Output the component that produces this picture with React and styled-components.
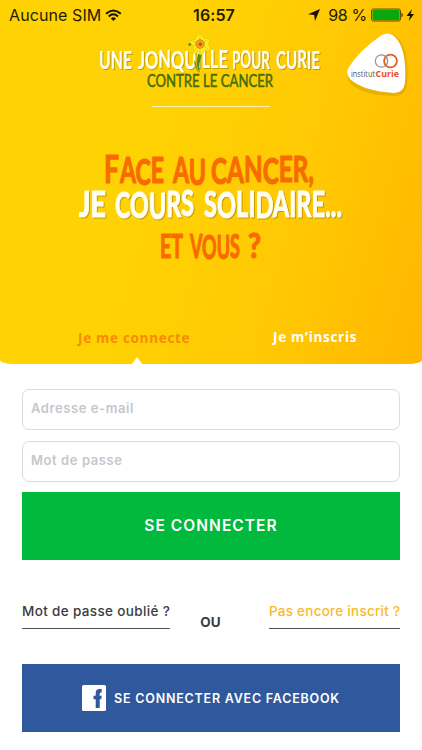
import React from 'react';
import styled, { createGlobalStyle } from 'styled-components';

const GlobalStyle = createGlobalStyle`
  * {
    box-sizing: border-box;
  }

  body {
    margin: 0;
    background: #ffffff;
    font-family: Inter, "Liberation Sans", sans-serif;
  }
`;

const Screen = styled.div`
  width: 422px;
  height: 750px;
  overflow: hidden;
  background: #ffffff;
`;

const Hero = styled.header`
  display: flex;
  flex-direction: column;
  height: 364px;
  border-radius: 0 0 14px 14px / 0 0 4px 4px;
  background: linear-gradient(106deg, #ffd203 0%, #ffd203 38%, #ffc803 70%, #ffb600 100%);
`;

const StatusBar = styled.div`
  display: grid;
  grid-template-columns: 1fr auto 1fr;
  align-items: center;
  height: 30px;
  padding: 0 7px 0 9px;
  color: #241c00;
  font-size: 16px;
  line-height: 30px;
`;

const StatusGroup = styled.div`
  display: flex;
  align-items: center;
  justify-content: ${({ $end }) => ($end ? 'flex-end' : 'flex-start')};
  gap: 4px;
  letter-spacing: ${({ $end }) => ($end ? '-0.3px' : '0.1px')};
  white-space: nowrap;

  svg {
    flex: none;
  }

  svg:first-child {
    margin-right: 4px;
  }
`;

const Clock = styled.div`
  padding-left: 4px;
  font-weight: 600;
  letter-spacing: 0.1px;
`;

const Brand = styled.div`
  display: flex;
  justify-content: space-between;
  height: 76px;
  padding: 2px 12px 0 97px;
`;

const Rule = styled.div`
  width: 118px;
  height: 1px;
  margin-left: 152px;
  background: #fff3b5;
`;

const Headline = styled.h1`
  display: flex;
  flex-direction: column;
  height: 188px;
  margin: 0;
  padding-top: 40px;

  svg {
    display: block;
    margin: 0 auto;
  }
`;

const Lettering = styled.text`
  font-family: ${({ $sans }) => ($sans ? '"Open Sans"' : 'Lato')}, sans-serif;
  font-weight: ${({ $weight }) => $weight || 700};
  fill: ${({ $color }) => $color};
  stroke: ${({ $color }) => $color};
  stroke-width: ${({ $brush }) => $brush || 0};
  stroke-linejoin: round;
  filter: ${({ $shadow }) => ($shadow ? 'drop-shadow(1px 1px 0.5px rgba(140, 110, 0, 0.5))' : 'none')};
`;

const Tabs = styled.nav`
  display: flex;
  flex: 1;
  padding-left: 59px;
`;

const Tab = styled.button`
  position: relative;
  display: flex;
  align-items: flex-start;
  width: ${({ $active }) => ($active ? '155px' : '201px')};
  padding: ${({ $active }) => ($active ? '33px 0 0 19px' : '32px 0 0 59px')};
  border: 0;
  background: none;
  color: ${({ $active }) => ($active ? '#f88a00' : '#ffffff')};
  font: 700 13.5px/20px "Open Sans", sans-serif;
  letter-spacing: 0.7px;
  white-space: nowrap;

  &::after {
    content: '';
    display: ${({ $active }) => ($active ? 'block' : 'none')};
    position: absolute;
    bottom: 0;
    left: 73px;
    border: 5px solid transparent;
    border-top: 0;
    border-bottom: 7px solid #ffffff;
  }
`;

const Form = styled.form`
  display: flex;
  flex-direction: column;
  padding: 25px 22px 0;
`;

const Field = styled.input`
  height: 41px;
  margin-bottom: 10.5px;
  padding: 0 8px 3px;
  border: 1px solid #dcdcde;
  border-radius: 7px;
  outline: 0;
  background: #ffffff;
  font: 600 13px Inter, sans-serif;
  letter-spacing: 0.58px;

  &::placeholder {
    color: #c6c6cd;
    opacity: 1;
  }
`;

const Button = styled.button`
  display: flex;
  align-items: center;
  justify-content: center;
  height: 68px;
  padding: 0 0 2px;
  border: 0;
  background: #00b93d;
  color: #ffffff;
  font: 600 15.5px Inter, sans-serif;
  letter-spacing: 1.05px;
`;

const FacebookButton = styled(Button)`
  gap: 8px;
  margin-top: 35px;
  padding: 0;
  background: #30599d;
  font-size: 12.5px;
  letter-spacing: 0.78px;
`;

const Links = styled.div`
  display: flex;
  justify-content: space-between;
  height: 29px;
  margin-top: 40px;
`;

const Link = styled.a`
  width: ${({ $width }) => $width};
  border-bottom: 1px solid #505052;
  color: ${({ $color }) => $color};
  font-size: 13.5px;
  font-weight: 500;
  line-height: 22px;
  letter-spacing: ${({ $spacing }) => $spacing};
  white-space: nowrap;
`;

const Or = styled.span`
  align-self: flex-end;
  margin-right: 18px;
  color: #3c3c3e;
  font-size: 13.5px;
  font-weight: 700;
  line-height: 14px;
`;

const WifiIcon = () => (
  <svg width="17" height="13" viewBox="0 0 17 13" fill="none" stroke="#171300" strokeWidth="2">
    <path d="M1 4.8Q8.3-1.8 15.8 4.8M3.7 7.4Q8.4 3.1 13 7.4" />
    <path d="M5.8 9.4Q8.4 7 11 9.4L8.4 12Z" fill="#171300" stroke="none" />
  </svg>
);

const LocationIcon = () => (
  <svg width="12" height="12" viewBox="0 0 12 12">
    <path d="M12 0L7 12L6.2 6.1L0 5.2Z" fill="#171300" />
  </svg>
);

const BatteryIcon = () => (
  <svg width="44" height="14" viewBox="0 0 44 14">
    <rect x=".5" y="1" width="29" height="12" rx="2" fill="#e6ba00" stroke="#655000" />
    <rect x="1.5" y="2" width="27" height="10" rx="1" fill="#08a80c" />
    <path d="M30.5 4.5Q33 7 30.5 9.5Z" fill="#302600" />
    <path d="M41 1L35.5 8H39L37.8 13L43 6H39.6Z" fill="#171300" />
  </svg>
);

const Daffodil = () => (
  <g strokeLinejoin="round">
    <path d="M101 22Q98 34 103 41Q101 33 105 22Z" fill="#578b16" />
    <path d="M97 28Q100 31 100 35L102 41Q97 35 97 28Z" fill="#75991b" />
    <circle cx="92.8" cy="12.5" r="1.4" fill="#4b8f16" />
    <path
      d="M103 1Q106 4 107 7L113 6Q113 9 111 12Q114 15 113 18Q110 20 108 18Q106 23 103 23L101 19Q96 23 95 21L97 14Q92 11 92 7L98 8Q99 3 103 1Z"
      fill="#fbed20"
      stroke="#e3c40b"
      strokeWidth=".6"
    />
    <path d="M103 2V12L112 7M103 12L111 17M103 12L103 22M103 12L96 20M103 12L93 8" fill="none" stroke="#dfc10c" strokeWidth=".7" />
    <circle cx="103" cy="12" r="4.2" fill="#f9a415" stroke="#e48208" />
    <circle cx="103.3" cy="12.3" r="1.8" fill="#c9522b" />
  </g>
);

const title = [
  { text: 'UNE', x: 2, y: 37, width: 33, dy: '0 0 0' },
  { text: 'JONQUILLE', x: 41, y: 37, width: 90, dy: '0 0 -1 1 0 -1 0 0 0' },
  { text: 'POUR', x: 135, y: 37, width: 38, dy: '0 -1 1 0' },
  { text: 'CURIE', x: 179, y: 37, width: 44, dy: '0 0 -1 1 0' },
];

const JonquilleLogo = () => (
  <svg width="226" height="62" viewBox="0 0 226 62">
    {title.map(({ text, width, ...position }) => (
      <Lettering
        key={text}
        {...position}
        fontSize="25"
        textLength={width}
        lengthAdjust="spacingAndGlyphs"
        $color="#fffef0"
        $brush={0.2}
        $shadow
      >
        {text}
      </Lettering>
    ))}
    <Lettering x="50" y="55" $color="#426d08" $weight={400} $brush={0.5} fontSize="16.5" textLength="126" lengthAdjust="spacingAndGlyphs">CONTRE LE CANCER</Lettering>
    <Daffodil />
  </svg>
);

const CurieLogo = () => (
  <svg width="65" height="66" viewBox="0 0 65 66">
    <path d="M5 37Q0 44 5 51Q18 64 50 64Q61 64 62 52Q65 17 52 5Q44-2 34 5Q16 18 5 37Z" fill="#8d6800" opacity=".2" />
    <path d="M4 35Q0 41 5 47Q18 59 49 61Q59 61 60 50Q62 17 50 5Q43-2 34 5Q15 18 4 35Z" fill="#fff" />
    <g fill="none">
      <circle cx="36.5" cy="29" r="6.2" stroke="#999" strokeWidth="1.3" />
      <circle cx="45.5" cy="29" r="6.4" stroke="#e95b21" strokeWidth="1.8" />
      <path d="M40.4 24.5A6.2 6.2 0 0 1 42.2 31" stroke="#999" strokeWidth="1.2" />
    </g>
    <Lettering $sans x="6" y="45" $color="#555" $weight={400} fontSize="8.5" textLength="24" lengthAdjust="spacingAndGlyphs">institut</Lettering>
    <Lettering $sans x="30.5" y="45" $color="#e65022" fontSize="9" textLength="23.5" lengthAdjust="spacingAndGlyphs">Curie</Lettering>
  </svg>
);

// Slight baseline shifts give each line its brushed, uneven look
const headline = [
  { text: 'F', x: 27, y: 36, size: 39, width: 15, color: '#f76b00', dy: '0' },
  { text: 'ACE', x: 43, y: 37, size: 36, width: 44, color: '#f76b00', dy: '-1 2 -2' },
  { text: 'AU', x: 96, y: 36, size: 36, width: 33, color: '#f76b00', dy: '0 2' },
  { text: 'CANCER,', x: 134, y: 37, size: 37, width: 103, color: '#f76b00', dy: '0 -1 -1 2 -2 0 0' },
  { text: 'JE', x: 2, y: 70, size: 36, width: 27, color: '#fffef0', dy: '0 0' },
  { text: 'COURS', x: 38, y: 71, size: 37, width: 79, color: '#fffef0', dy: '0 0 1 -2 -1' },
  { text: 'SOLIDAIRE...', x: 127, y: 70, size: 37, width: 138, color: '#fffef0', dy: '0 1 -1 0 1 -1 0 0 0 0 0 0' },
  { text: 'ET', x: 83, y: 111, size: 32, width: 23, color: '#f76b00', dy: '0 0' },
  { text: 'VOUS', x: 113, y: 111, size: 33, width: 50, color: '#f76b00', dy: '0 1 0 -1' },
  { text: '?', x: 171, y: 111, size: 34, width: 13, color: '#f76b00', dy: '0' },
];

const HeadlineArt = () => (
  <svg width="268" height="125" viewBox="0 0 268 125">
    {headline.map(({ text, size, width, color, ...position }) => (
      <Lettering
        key={text}
        {...position}
        fontSize={size}
        textLength={width}
        lengthAdjust="spacingAndGlyphs"
        $color={color}
        $brush={1.2}
        $shadow={color === '#fffef0'}
      >
        {text}
      </Lettering>
    ))}
  </svg>
);

const FacebookIcon = () => (
  <svg width="24" height="26" viewBox="0 0 24 26">
    <rect width="24" height="26" rx="1.5" fill="#fff" />
    <path d="M13.7 23V14.3H11.5V10.7H13.7V8.2Q13.7 4 17.5 4H19.7V7.6H18.8Q17.7 7.6 17.7 8.9V10.7H19.7L19.3 14.3H17.7V23Z" fill="#30599d" />
  </svg>
);

const App = () => (
  <Screen>
    <GlobalStyle />
    <Hero>
      <StatusBar>
        <StatusGroup>
          <span>Aucune SIM</span>
          <WifiIcon />
        </StatusGroup>
        <Clock>16:57</Clock>
        <StatusGroup $end>
          <LocationIcon />
          <span>98 %</span>
          <BatteryIcon />
        </StatusGroup>
      </StatusBar>
      <Brand>
        <JonquilleLogo />
        <CurieLogo />
      </Brand>
      <Rule />
      <Headline>
        <HeadlineArt />
      </Headline>
      <Tabs>
        <Tab $active>Je me connecte</Tab>
        <Tab>Je m’inscris</Tab>
      </Tabs>
    </Hero>
    <Form>
      <Field type="email" placeholder="Adresse e-mail" />
      <Field type="password" placeholder="Mot de passe" />
      <Button type="button">SE CONNECTER</Button>
      <Links>
        <Link $width="148px" $color="#3c3c3e" $spacing="0.35px">Mot de passe oublié ?</Link>
        <Or>OU</Or>
        <Link $width="131px" $color="#fbb829" $spacing="0.25px">Pas encore inscrit ?</Link>
      </Links>
      <FacebookButton type="button">
        <FacebookIcon />
        SE CONNECTER AVEC FACEBOOK
      </FacebookButton>
    </Form>
  </Screen>
);

export default App;
